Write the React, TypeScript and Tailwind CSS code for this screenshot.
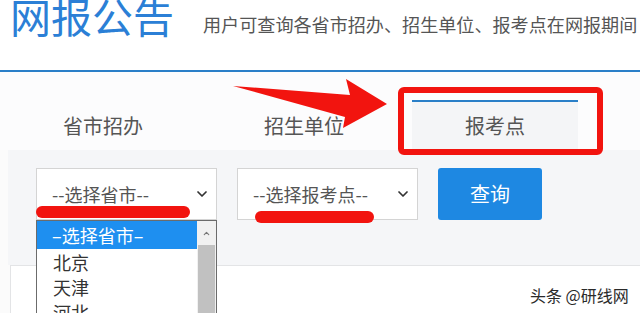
import { ChevronDown, ChevronUp } from 'lucide-react';

const FONT = '"Noto Sans CJK SC", "Noto Sans", sans-serif';

function FakeSelect({ label }: { label: string }) {
  return (
    <div className="flex h-[52px] w-[181px] items-center justify-between border border-[#d4d4d4] bg-white pl-[15px] pr-[6px]">
      <span className="text-[18px] leading-none text-[#555]">{label}</span>
      <ChevronDown className="size-[16px] text-[#333]" strokeWidth={2.6} />
    </div>
  );
}

export default function App() {
  const cities = ['北京', '天津', '河北'];

  return (
    <div
      className="relative h-[313px] w-[640px] overflow-hidden bg-[#fbfbfb]"
      style={{ fontFamily: FONT }}
    >
      {/* en-tête */}
      <div className="flex h-[70px] items-start overflow-hidden bg-white pl-[10px]">
        <h1 className="mt-[-5px] shrink-0 whitespace-nowrap text-[41px] font-normal leading-none text-[#2b7fd6]">
          网报公告
        </h1>
        <p className="ml-[29px] mt-[15px] shrink-0 whitespace-nowrap text-[18.1px] leading-none text-[#555]">
          用户可查询各省市招办、招生单位、报考点在网报期间
        </p>
      </div>
      <div className="h-[2px] bg-[#2a7fc8]" />

      {/* onglets */}
      <div className="flex h-[78px] items-end bg-[#fcfcfd]">
        <div className="ml-[3px] flex h-[50px] w-[200px] items-center justify-center pt-[2px] text-[20px] leading-none text-[#555]">
          省市招办
        </div>
        <div className="flex h-[50px] w-[202px] items-center justify-center pt-[2px] text-[20px] leading-none text-[#555]">
          招生单位
        </div>
        <div className="ml-[7px] flex h-[50px] w-[166px] items-center justify-center border-t-2 border-[#2a7fc8] bg-[#f4f5f7] text-[20px] leading-none text-[#555]">
          报考点
        </div>
      </div>

      {/* filtres */}
      <div className="ml-[8px] flex h-[115px] items-start gap-[20px] bg-[#f5f6f8] pl-[28px] pt-[18px]">
        <FakeSelect label="--选择省市--" />
        <FakeSelect label="--选择报考点--" />
        <button className="h-[52px] w-[104px] rounded-[3px] bg-[#1e88e2] text-[20px] leading-none text-white">
          查询
        </button>
      </div>

      {/* panneau du bas */}
      <div className="ml-[10px] h-[60px] border-l border-t border-[#e3e4e6] bg-white" />

      {/* liste déroulante ouverte */}
      <div className="absolute left-[36px] top-[220px] flex h-[110px] w-[181px] border border-[#6b6b6b] bg-white">
        <div className="flex-1">
          <div className="flex h-[28px] items-center bg-[#1e8ff0] pl-[15px] text-[18px] leading-none text-white">
            –选择省市–
          </div>
          {cities.map(c => (
            <div key={c} className="flex h-[25px] items-center pl-[16px] text-[18px] leading-none text-[#333]">
              {c}
            </div>
          ))}
        </div>
        <div className="flex w-[19px] flex-col bg-[#f1f1f1]">
          <div className="flex h-[24px] items-center justify-center">
            <ChevronUp className="size-[9px] text-[#777]" strokeWidth={3} />
          </div>
          <div className="mx-[1px] flex-1 bg-[#c1c1c1]" />
        </div>
      </div>

      {/* annotations rouges */}
      <div className="absolute left-[36px] top-[206px] h-[12px] w-[154px] rounded-full bg-[#f2140f]" />
      <div className="absolute left-[255px] top-[211px] h-[12px] w-[119px] rounded-full bg-[#f2140f]" />
      <div className="absolute left-[398px] top-[87px] h-[68px] w-[205px] rounded-[6px] border-[6px] border-[#f2140f]" />
      <svg className="absolute left-0 top-0" width="640" height="313" viewBox="0 0 640 313">
        <polygon points="233,86 350,95 346,79 387,104 343,128 345,117" fill="#f2140f" />
      </svg>

      {/* filigrane */}
      <div
        className="absolute left-[530px] top-[287px] text-[16px] leading-none text-[#2a2a2a]"
        style={{ textShadow: '0 0 2px #fff, 0 0 2px #fff' }}
      >
        头条 @研线网
      </div>
    </div>
  );
}
